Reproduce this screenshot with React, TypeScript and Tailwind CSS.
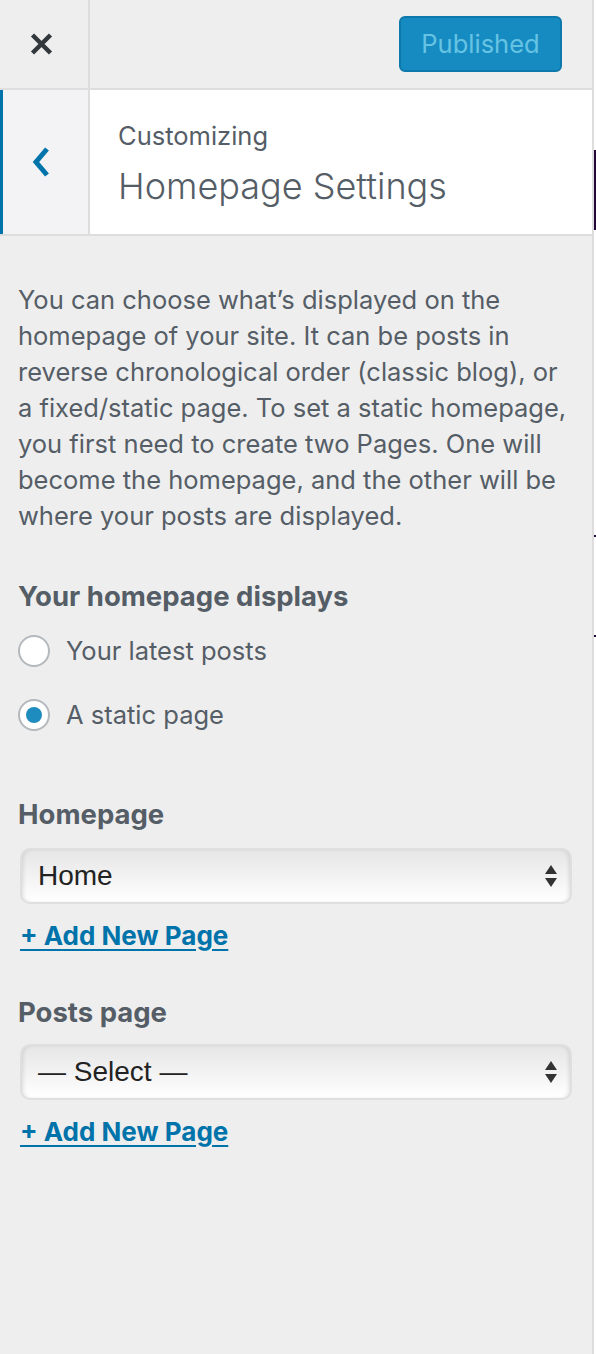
import { useState } from "react";

const font = { fontFamily: 'Inter, "Liberation Sans", Arial, sans-serif' };
const selectFont = { fontFamily: '"Liberation Sans", Arial, sans-serif' };

function Arrows() {
  return (
    <svg width="14" height="24" viewBox="0 0 14 24" className="shrink-0">
      <path d="M7 1 L13 10 L1 10 Z" fill="#333" />
      <path d="M1 14 L13 14 L7 23 Z" fill="#333" />
    </svg>
  );
}

function FakeSelect({ value }: { value: string }) {
  return (
    <div className="mx-[2px] flex h-[56px] items-center justify-between rounded-[10px] border-2 border-[#dfdfdf] bg-gradient-to-b from-[#e6e6e6] to-white pl-[16px] pr-[12px] shadow-[inset_3px_0_4px_-2px_rgba(0,0,0,0.12),inset_-3px_0_4px_-2px_rgba(0,0,0,0.12)]">
      <span className="text-[28px] text-[#222]" style={selectFont}>{value}</span>
      <Arrows />
    </div>
  );
}

function Radio({ checked, label, onClick }: { checked: boolean; label: string; onClick: () => void }) {
  return (
    <button onClick={onClick} className="flex items-center gap-[16px] text-left">
      <span className="flex h-[32px] w-[32px] items-center justify-center rounded-full border-2 border-[#b4b9be] bg-white">
        {checked && <span className="h-[16px] w-[16px] rounded-full bg-[#1e8cbe]" />}
      </span>
      <span className="text-[25.5px] text-[#555d66]">{label}</span>
    </button>
  );
}

export default function App() {
  const [shows, setShows] = useState("page");

  return (
    <div className="flex h-[1354px] w-[596px] overflow-hidden bg-[#eeeeee]" style={font}>
      <div className="flex w-[594px] shrink-0 flex-col border-r-2 border-[#dddddd]">
        {/* top bar */}
        <div className="flex h-[90px] shrink-0 border-b-2 border-[#dddddd]">
          <button className="flex w-[90px] items-center justify-start border-r-2 border-[#dddddd] pl-[30px]">
            <svg width="23" height="22" viewBox="0 0 23 22">
              <path d="M2.5 2 L20.5 20 M20.5 2 L2.5 20" stroke="#32373c" strokeWidth="4.5" />
            </svg>
          </button>
          <div className="flex flex-1 items-start justify-end pr-[30px] pt-[16px]">
            <button className="h-[56px] w-[163px] rounded-[6px] border-2 border-[#0e78ad] bg-[#168bc2] text-[25.5px] text-[#66c3e3]">
              Published
            </button>
          </div>
        </div>

        {/* section header */}
        <div className="flex h-[146px] shrink-0 border-b-2 border-[#dddddd] bg-white">
          <button className="flex w-[90px] items-center justify-start border-l-[3px] border-r-2 border-l-[#0073aa] border-r-[#dddddd] bg-[#f3f3f5] pl-[29px]">
            <svg width="18" height="30" viewBox="0 0 18 30">
              <path d="M15 2 L4 15 L15 28" stroke="#0073aa" strokeWidth="5" fill="none" />
            </svg>
          </button>
          <div className="flex flex-col pl-[28px] pt-[30px]">
            <span className="text-[25.5px] leading-[32px] text-[#555d66]">Customizing</span>
            <span className="mt-[9px] text-[36px] font-light leading-[50px] text-[#555d66]">Homepage Settings</span>
          </div>
        </div>

        {/* controls */}
        <div className="flex flex-col px-[18px] pt-[46px] text-[#555d66]">
          <p className="text-[25.5px] leading-[36px]">
            You can choose what’s displayed on the homepage of your site. It can be posts in reverse chronological order (classic blog), or a fixed/static page. To set a static homepage, you first need to create two Pages. One will become the homepage, and the other will be where your posts are displayed.
          </p>

          <h3 className="mt-[44px] text-[27.5px] font-bold leading-[36px]">Your homepage displays</h3>
          <div className="mt-[18px] flex flex-col gap-[26px]">
            <Radio checked={shows === "posts"} label="Your latest posts" onClick={() => setShows("posts")} />
            <Radio checked={shows === "page"} label="A static page" onClick={() => setShows("page")} />
          </div>

          <h3 className="mt-[61px] text-[27.5px] font-bold leading-[36px]">Homepage</h3>
          <div className="mt-[16px]">
            <FakeSelect value="Home" />
          </div>
          <a href="#" className="mt-[14px] self-start pl-[2px] text-[26px] font-bold leading-[36px] text-[#0073aa] underline underline-offset-[4px]">
            + Add New Page
          </a>

          <h3 className="mt-[40px] text-[27.5px] font-bold leading-[36px]">Posts page</h3>
          <div className="mt-[14px]">
            <FakeSelect value="— Select —" />
          </div>
          <a href="#" className="mt-[14px] self-start pl-[2px] text-[26px] font-bold leading-[36px] text-[#0073aa] underline underline-offset-[4px]">
            + Add New Page
          </a>
        </div>
      </div>

      {/* preview edge */}
      <div className="flex w-[2px] flex-col bg-white">
        <div className="h-[150px]" />
        <div className="h-[80px] bg-[#23063a]" />
        <div className="h-[305px]" />
        <div className="h-[2px] bg-[#23063a]" />
        <div className="h-[98px]" />
        <div className="h-[2px] bg-[#23063a]" />
      </div>
    </div>
  );
}
